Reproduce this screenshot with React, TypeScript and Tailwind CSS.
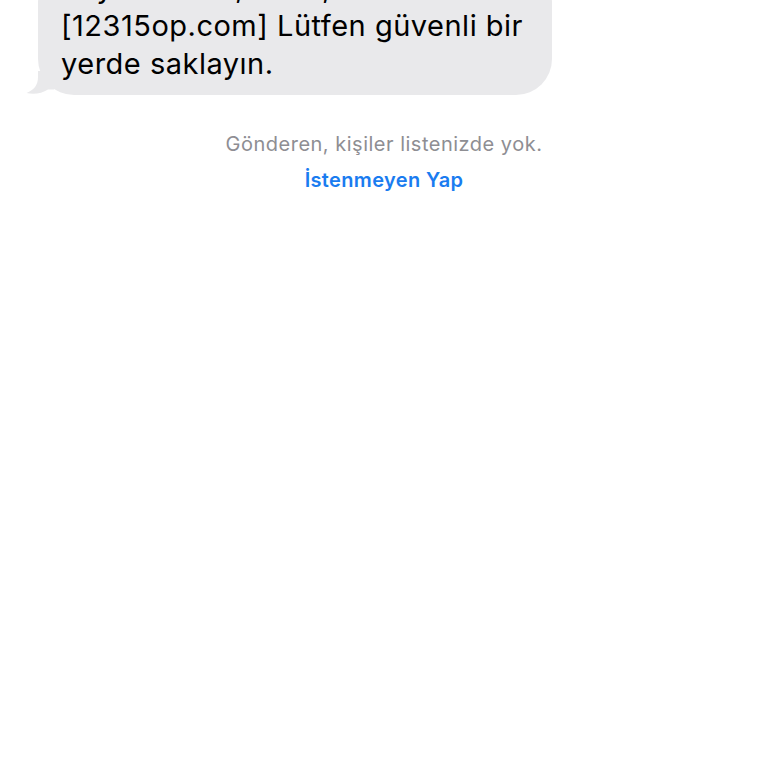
import React from "react";

export default function App() {
  return (
    <div className="w-[768px] h-[768px] bg-white overflow-hidden flex flex-col" style={{ fontFamily: 'Inter, "Liberation Sans", Arial, sans-serif' }}>
      <div className="ml-[38px] w-[514px] relative mt-[-33px]">
        <div className="bg-[#e9e9eb] rounded-[36px] pl-[23px] pr-[20px] pt-[2px] pb-[12px] text-[29px] leading-[38px] tracking-[0.5px] text-black whitespace-nowrap">
          Sayın abone, kodu, 482913
          <br />
          [12315op.com] Lütfen güvenli bir
          <br />
          yerde saklayın.
        </div>
        <svg className="absolute left-[-14px] bottom-0" width="30" height="24" viewBox="0 0 30 24">
          <path d="M14 0 L14 6 C14 14 10 19 2.5 22 C10 23.5 18 22.5 24 18.5 L30 18.5 L30 0 Z" fill="#e9e9eb" />
        </svg>
      </div>
      <div className="mt-[37px] text-center text-[20px] leading-[24px] tracking-[0.5px] text-[#8e8e93]">
        Gönderen, kişiler listenizde yok.
      </div>
      <div className="mt-[12px] text-center text-[20px] leading-[24px] tracking-[0.35px] font-semibold text-[#1a7cf0]">
        İstenmeyen Yap
      </div>
    </div>
  );
}
